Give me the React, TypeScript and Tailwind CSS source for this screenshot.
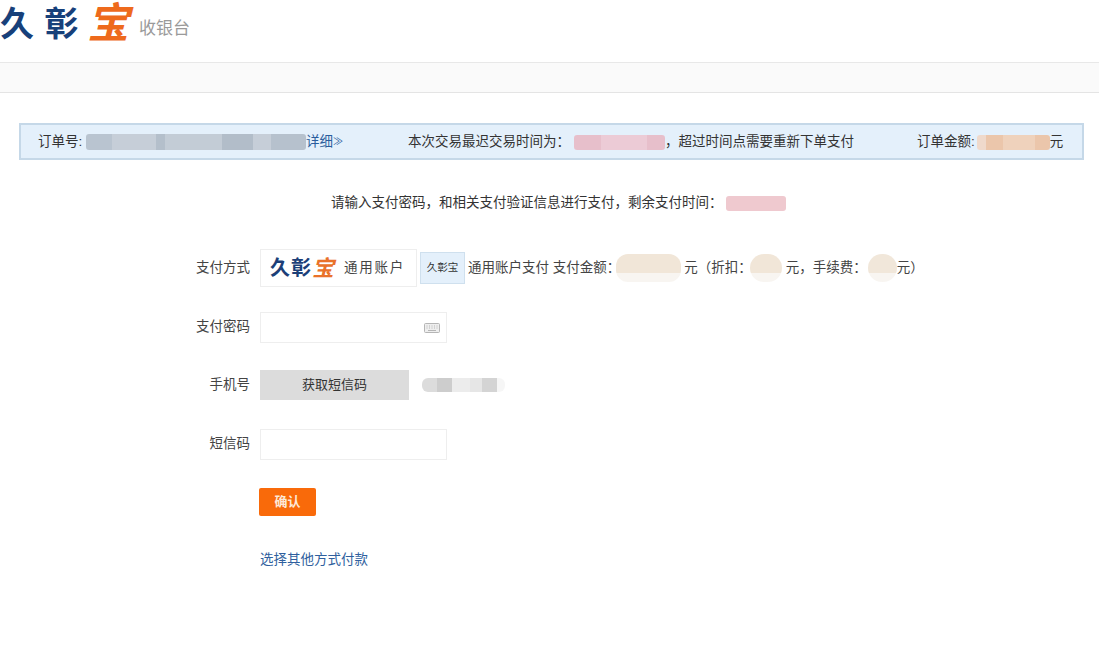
const CJK = { fontFamily: '"Liberation Sans", "Noto Sans CJK SC", sans-serif' }

function Mask({ className }: { className: string }) {
  return <span className={`inline-block rounded-[3px] blur-[0.6px] ${className}`} />
}

function FormRow({ label, className, children }: { label: string; className: string; children: React.ReactNode }) {
  return (
    <div className={`flex items-center ${className}`}>
      <label className="w-[250px] text-right text-[13.5px] text-[#444]">{label}</label>
      <div className="ml-[10px] flex items-center">{children}</div>
    </div>
  )
}

function Logo({ small }: { small?: boolean }) {
  return (
    <span className="flex items-center">
      <span className={small ? 'text-[20px] font-bold tracking-[1px] text-[#1c3f78]' : 'text-[34px] font-bold leading-none tracking-[10.5px] text-[#17407a]'}>久彰</span>
      <span className={small ? 'text-[22px] font-bold italic text-[#e9722a]' : '-ml-[2px] text-[42px] font-bold italic leading-none text-[#ee6a1c]'}>宝</span>
    </span>
  )
}

export default function App() {
  return (
    <div style={CJK} className="min-h-[658px] bg-white text-[13.5px] text-[#333]">
      {/* Header */}
      <header className="flex h-[63px] items-center border-b border-[#e8e8e8] pb-[14px]">
        <Logo />
        <span className="ml-[10px] mt-[10px] text-[17px] text-[#9a9a9a]">收银台</span>
      </header>
      <div className="h-[30px] border-b border-[#e4e4e4] bg-[#fafafa]" />

      {/* Order info */}
      <div className="mx-[19px] mt-[30px] flex h-[37px] w-[1065px] items-center border-2 border-[#c5d8e8] bg-[#e4f0fb] pl-[17px] pt-[1px]">
        <span className="w-[48px]">订单号:</span>
        <Mask className="h-[16px] w-[220px] bg-[linear-gradient(90deg,#b9c4d0_0_12%,#c6ced8_12%_32%,#b4bfcb_32%_36%,#c3ccd6_36%_62%,#b2bdc9_62%_76%,#c6ced8_76%_84%,#b6c1cd_84%_100%)]" />
        <span className="text-[#2a5d9c]">详细</span>
        <span className="text-[10px] leading-none text-[#2a5d9c]">≫</span>
        <span className="ml-[65px]">本次交易最迟交易时间为：</span>
        <Mask className="ml-[4px] h-[15px] w-[91px] bg-[linear-gradient(90deg,#e7bfcb_0_30%,#eccbd6_30%_80%,#e7bfcb_80%_100%)]" />
        <span>，超过时间点需要重新下单支付</span>
        <span className="ml-[63px]">订单金额:</span>
        <Mask className="ml-[2px] h-[15px] w-[73px] bg-[linear-gradient(90deg,#efd9cb_0_12%,#ebc6ab_12%_35%,#efd2bc_35%_80%,#ebc6ab_80%_100%)]" />
        <span>元</span>
      </div>

      <div className="mt-[34px] flex h-[18px] items-center pl-[331px]">
        <span>请输入支付密码，和相关支付验证信息进行支付，剩余支付时间：</span>
        <Mask className="ml-[3px] h-[15px] w-[60px] bg-[#efc9cf]" />
      </div>

      {/* Form */}
      <FormRow label="支付方式" className="mt-[37px] h-[38px]">
        <div className="flex h-[38px] w-[157px] items-center border border-[#eeeeee] pl-[9px]">
          <Logo small />
          <span className="ml-[10px] text-[13.5px] tracking-[1.75px] text-[#444]">通用账户</span>
        </div>
        <span className="ml-[3px] flex h-[32px] w-[45px] items-center justify-center border border-[#cfe0ee] bg-[#e4f0fb] text-[10.5px]">久彰宝</span>
        <span className="ml-[3px] text-[#444]">通用账户支付 支付金额：</span>
        <Mask className="ml-[-4px] h-[28px] w-[65px] rounded-[12px] bg-[linear-gradient(180deg,#f1e6d8_0_68%,#f8f5f1_68%)]" />
        <span className="ml-[3px] text-[#444]">元（折扣：</span>
        <Mask className="ml-[-2px] h-[28px] w-[32px] rounded-[14px] bg-[linear-gradient(180deg,#f1e6d8_0_68%,#f8f5f1_68%)]" />
        <span className="ml-[4px] text-[#444]">元，手续费：</span>
        <Mask className="ml-[1px] h-[28px] w-[29px] rounded-[14px] bg-[linear-gradient(180deg,#f1e7da_0_68%,#f8f5f1_68%)]" />
        <span className="text-[#444]">元）</span>
      </FormRow>

      <FormRow label="支付密码" className="mt-[25px] h-[31px]">
        <div className="flex h-[31px] w-[187px] items-center justify-end border border-[#eeeeee] pr-[6px]">
          <svg width="16" height="10" viewBox="0 0 16 10" fill="none" stroke="#b5b5b5">
            <rect x="0.5" y="0.5" width="15" height="9" rx="1" fill="#eeeeee" />
            <path d="M2.5 3h1M5 3h1M7.5 3h1M10 3h1M12.5 3h1M2.5 5h1M5 5h1M7.5 5h1M10 5h1M12.5 5h1M4 7.5h8" />
          </svg>
        </div>
      </FormRow>

      <FormRow label="手机号" className="mt-[27px] h-[30px]">
        <button className="h-[30px] w-[149px] bg-[#dcdcdc] text-[13px] text-[#333]">获取短信码</button>
        <Mask className="ml-[13px] h-[14px] w-[83px] rounded-[6px] bg-[linear-gradient(90deg,#dcdcdc_0_18%,#cdcdcd_18%_36%,#ececec_36%_58%,#e6e6e6_58%_72%,#d4d4d4_72%_90%,#f6f6f6_90%_100%)]" />
      </FormRow>

      <FormRow label="短信码" className="mt-[29px] h-[31px]">
        <div className="h-[31px] w-[187px] border border-[#eeeeee]" />
      </FormRow>

      <button className="ml-[259px] mt-[28px] block h-[28px] w-[57px] rounded-[2px] bg-[#f96a0a] text-[13px] font-bold text-[#fde9d8]">确认</button>

      <a className="ml-[260px] mt-[34px] block text-[#2f5f9e]">选择其他方式付款</a>
    </div>
  )
}
